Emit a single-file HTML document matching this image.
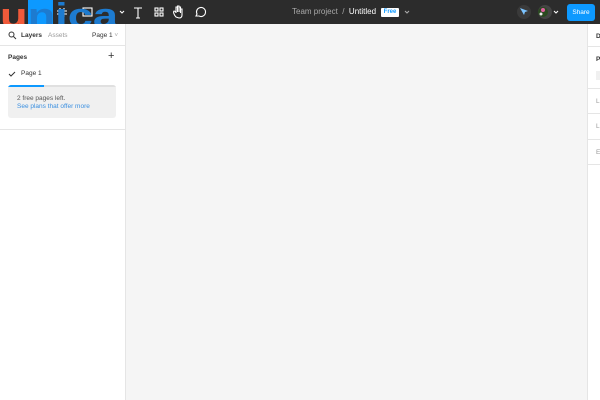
<!DOCTYPE html><html><head><style>
body{margin:0;width:600px;height:400px;overflow:hidden;font-family:"Liberation Sans",sans-serif;background:#f5f5f5;position:relative}
.tb{position:absolute;left:0;top:0;width:600px;height:24px;background:#2c2c2c}
.a{position:absolute}
.lp{position:absolute;left:0;top:24px;width:125px;height:376px;background:#fff;border-right:1px solid #e5e5e5}
.rp{position:absolute;left:587px;top:24px;width:13px;height:376px;background:#fff;border-left:1px solid #e5e5e5}
.t{position:absolute;font-size:6.5px;color:#333}
.hl{position:absolute;left:0;width:13px;height:1px;background:#e5e5e5}
</style></head><body>
<div class="tb"></div>
<div class="a" style="left:28px;top:0;width:25px;height:24px;background:#0d99ff"></div>
<svg class="a" style="left:0;top:0" width="600" height="24">
<g stroke="#fff" fill="none" stroke-width="1.1">
<path d="M60 8v9M64 8v9M57 11h10M57 14h10"/>
<rect x="83" y="8" width="9" height="8"/>
<path d="M120 11l2 2 2-2"/>
<path d="M134 8h8M138 8v10M136 18h4"/>
<rect x="155" y="8" width="3" height="3"/><rect x="160" y="8" width="3" height="3"/><rect x="155" y="13" width="3" height="3"/><rect x="160" y="13" width="3" height="3"/>
<path d="M176 17c-2-2-3-5-2-6 1 0 2 1 2 2v-6h1.5v5v-6h1.5v6v-5h1.5v6v-4h1.5v6c0 2-1 3-3 3z"/>
<path d="M196 16l1-2a4.5 4.5 0 1 1 2 2z"/>
<path d="M405 11l2 2 2-2" stroke="#aaa"/>
<path d="M554 11l2 2 2-2"/>
</g>
<circle cx="524" cy="12" r="7" fill="#3a3a3a"/>
<path d="M520 8l8 3-3 1-1 3z" fill="#7cc4ff"/>
<circle cx="545" cy="12" r="7" fill="#444"/>
<circle cx="543" cy="12" r="5" fill="#2a4a20"/>
<circle cx="543" cy="10" r="2" fill="#e060a0"/>
<circle cx="541" cy="14" r="1.5" fill="#eee"/>
<rect x="381" y="8" width="18" height="9" rx="1" fill="#fff"/>
<text x="0" y="27" font-size="34" font-weight="bold" font-family="Liberation Sans" textLength="118" lengthAdjust="spacingAndGlyphs"><tspan fill="#f05a3a">u</tspan><tspan fill="#1d7bd0">nica</tspan></text>
</svg>
<div class="a" style="left:381px;top:9px;width:18px;text-align:center;font-size:6px;color:#0d99ff;font-weight:bold">Free</div>
<div class="a" style="left:292px;top:7px;font-size:8px;color:#aaa;white-space:nowrap">Team project&nbsp;&nbsp;/&nbsp;&nbsp;<span style="color:#fff">Untitled</span></div>
<div class="a" style="left:567px;top:4px;width:28px;height:17px;background:#0d99ff;border-radius:3px;color:#fff;font-size:6.5px;text-align:center;line-height:17px">Share</div>
<div class="lp"></div>
<svg class="a" style="left:8px;top:31px" width="10" height="10"><circle cx="3.5" cy="3.5" r="2.5" stroke="#333" fill="none" stroke-width="1"/><path d="M5.5 5.5l2.5 2.5" stroke="#333"/></svg>
<div class="t" style="left:21px;top:32px;font-weight:bold">Layers</div>
<div class="t" style="left:48px;top:32px;color:#999">Assets</div>
<div class="t" style="left:92px;top:32px">Page 1 <span style="color:#aaa">˅</span></div>
<div class="a" style="left:0;top:45px;width:125px;height:1px;background:#e5e5e5"></div>
<div class="t" style="left:8px;top:54px;font-weight:bold">Pages</div>
<div class="a" style="left:108px;top:50px;font-size:11px;color:#333">+</div>
<svg class="a" style="left:8px;top:70px" width="8" height="8"><path d="M1 4l2 2 4-4" stroke="#333" fill="none" stroke-width="1"/></svg>
<div class="t" style="left:21px;top:70px">Page 1</div>
<div class="a" style="left:8px;top:85px;width:108px;height:33px;background:#f0f0f0;border-radius:3px;overflow:hidden">
<div style="height:2px;background:#e0e0e0"><div style="width:36px;height:2px;background:#0d99ff"></div></div></div>
<div class="t" style="left:17px;top:95px;color:#555">2 free pages left.</div>
<div class="t" style="left:17px;top:103px;color:#3a8fe0">See plans that offer more</div>
<div class="a" style="left:0;top:129px;width:125px;height:1px;background:#e5e5e5"></div>
<div class="rp">
<div class="hl" style="top:22px"></div>
<div class="hl" style="top:64px"></div>
<div class="hl" style="top:89px"></div>
<div class="hl" style="top:115px"></div>
<div class="hl" style="top:140px"></div>
<div class="t" style="left:8px;top:9px;font-weight:bold">D</div>
<div class="t" style="left:8px;top:32px;font-weight:bold">P</div>
<div style="position:absolute;left:8px;top:47px;width:6px;height:9px;background:#f0f0f0"></div>
<div class="t" style="left:8px;top:74px;color:#999">L</div>
<div class="t" style="left:8px;top:99px;color:#999">L</div>
<div class="t" style="left:8px;top:125px;color:#999">E</div>
</div>
</body></html>
